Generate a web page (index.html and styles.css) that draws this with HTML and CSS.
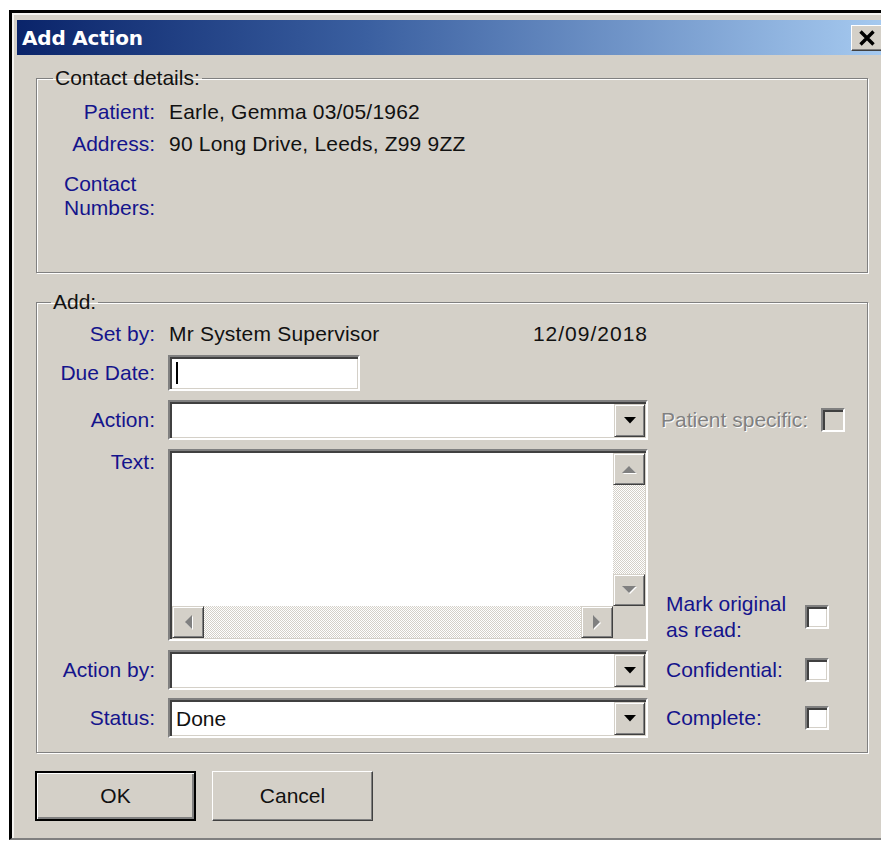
FILE: index.html
```html
<!DOCTYPE html>
<html lang="en">
<head>
<meta charset="utf-8">
<title>Add Action</title>
<link rel="stylesheet" href="styles.css">
</head>
<body>
<div class="dialog">
  <div class="titlebar">
    <span class="title">Add Action</span>
    <button class="close-btn" type="button" aria-label="Close">
      <svg width="18" height="16" viewBox="0 0 18 16"><path d="M2.5 1.5 L15.5 14.5 M15.5 1.5 L2.5 14.5" stroke="#000" stroke-width="3.4" fill="none"/></svg>
    </button>
  </div>

  <fieldset class="group group-contact">
    <legend class="legend-contact">Contact details:</legend>
    <div class="contact-grid">
      <div class="lbl">Patient:</div>
      <div class="val">Earle, Gemma 03/05/1962</div>
      <div class="lbl">Address:</div>
      <div class="val">90 Long Drive, Leeds, Z99 9ZZ</div>
      <div class="lbl lbl-multi">Contact<br>Numbers:</div>
      <div class="val"></div>
    </div>
  </fieldset>

  <fieldset class="group group-add">
    <legend class="legend-add">Add:</legend>
    <div class="add-grid">
      <!-- Set by -->
      <div class="lbl">Set by:</div>
      <div class="val setby"><span>Mr System Supervisor</span><span class="date">12/09/2018</span></div>
      <div></div>

      <!-- Due date -->
      <div class="lbl">Due Date:</div>
      <div class="field-cell"><div class="edit due"><span class="caret"></span></div></div>
      <div></div>

      <!-- Action -->
      <div class="lbl">Action:</div>
      <div class="field-cell">
        <div class="combo"><div class="combo-text"></div><span class="drop-btn"><svg width="12" height="7" viewBox="0 0 12 7"><path d="M0 0 H12 L6 6.5 Z" fill="#000"/></svg></span></div>
      </div>
      <div class="side side-specific"><span class="disabled-text">Patient specific:</span><span class="chk chk-disabled"></span></div>

      <!-- Text -->
      <div class="lbl lbl-top">Text:</div>
      <div class="field-cell">
        <div class="memo">
          <div class="memo-body"></div>
          <div class="vscroll">
            <span class="sbtn"><svg width="18" height="10" viewBox="0 0 18 10"><path d="M2 9 L9 2 L16 9 Z" fill="#fff" transform="translate(1 1)"/><path d="M2 9 L9 2 L16 9 Z" fill="#808080"/></svg></span>
            <span class="track"></span>
            <span class="sbtn"><svg width="18" height="10" viewBox="0 0 18 10"><path d="M2 1 L16 1 L9 8 Z" fill="#fff" transform="translate(1 1)"/><path d="M2 1 L16 1 L9 8 Z" fill="#808080"/></svg></span>
          </div>
          <div class="hscroll">
            <span class="sbtn"><svg width="10" height="18" viewBox="0 0 10 18"><path d="M9 2 L2 9 L9 16 Z" fill="#fff" transform="translate(1 1)"/><path d="M9 2 L2 9 L9 16 Z" fill="#808080"/></svg></span>
            <span class="track"></span>
            <span class="sbtn"><svg width="10" height="18" viewBox="0 0 10 18"><path d="M1 2 L8 9 L1 16 Z" fill="#fff" transform="translate(1 1)"/><path d="M1 2 L8 9 L1 16 Z" fill="#808080"/></svg></span>
          </div>
          <div class="corner"></div>
        </div>
      </div>
      <div class="side side-mark"><span class="side-label two-line">Mark original<br>as read:</span><span class="chk"></span></div>

      <!-- Action by -->
      <div class="lbl">Action by:</div>
      <div class="field-cell">
        <div class="combo"><div class="combo-text"></div><span class="drop-btn"><svg width="12" height="7" viewBox="0 0 12 7"><path d="M0 0 H12 L6 6.5 Z" fill="#000"/></svg></span></div>
      </div>
      <div class="side"><span class="side-label">Confidential:</span><span class="chk"></span></div>

      <!-- Status -->
      <div class="lbl">Status:</div>
      <div class="field-cell">
        <div class="combo"><div class="combo-text">Done</div><span class="drop-btn"><svg width="12" height="7" viewBox="0 0 12 7"><path d="M0 0 H12 L6 6.5 Z" fill="#000"/></svg></span></div>
      </div>
      <div class="side"><span class="side-label">Complete:</span><span class="chk"></span></div>
    </div>
  </fieldset>

  <div class="buttons">
    <button class="btn btn-default" type="button">OK</button>
    <button class="btn" type="button">Cancel</button>
  </div>
</div>
</body>
</html>
```

FILE: styles.css
```css
html, body {
  margin: 0;
  padding: 0;
  background: #fff;
  overflow: hidden;
}

body {
  font-family: "Liberation Sans", Arial, sans-serif;
  font-size: 21px;
  color: #111;
  padding: 10px 0 0 9px;
  height: 841px;
  box-sizing: border-box;
}

/* window frame */
.dialog {
  width: 868px;
  padding: 7px 0 17px 5px;
  background: #d4d0c8;
  border-left: 3px solid #000;
  border-top: 3px solid #000;
  border-bottom: 2px solid #808080;
  box-shadow: inset 2px 2px 0 #f4f3f0;
}

.titlebar {
  height: 35px;
  display: flex;
  align-items: center;
  justify-content: space-between;
  padding: 0 2px 0 5px;
  background: linear-gradient(to right, #0a246a 0%, #3a5fa0 40%, #a6caf0 100%);
}

.title {
  font-family: "DejaVu Sans", Verdana, sans-serif;
  font-weight: bold;
  font-size: 20px;
  color: #fff;
  letter-spacing: -0.2px;
}

.close-btn {
  width: 32px;
  height: 26px;
  padding: 0;
  margin: 0;
  display: flex;
  align-items: center;
  justify-content: center;
  background: #d4d0c8;
  border: 1px solid;
  border-color: #fff #404040 #404040 #fff;
  box-shadow: inset -1px -1px 0 #808080;
}

/* etched group boxes */
.group {
  margin: 11px 0 0 19px;
  padding: 0;
  width: 832px;
  min-inline-size: 0;
  box-sizing: border-box;
  border: 1px solid #808080;
  box-shadow: inset 1px 1px 0 #fff, 1px 1px 0 #fff;
}

.group legend {
  padding: 0 2px;
  line-height: 24px;
}

.legend-contact { margin-left: 16px; }
.legend-add { margin-left: 14px; }

.group-add { margin-top: 17px; }

.lbl {
  text-align: right;
  padding-right: 13px;
  color: #14148c;
}

.val { padding-left: 1px; letter-spacing: 0.2px; }

.date { letter-spacing: 1px; }

.contact-grid {
  display: grid;
  grid-template-columns: 131px 1fr;
  grid-template-rows: 32px 32px 112px;
  align-items: center;
  padding-top: 6px;
}

.lbl-multi {
  align-self: start;
  justify-self: end;
  text-align: left;
  line-height: 24px;
  margin-top: 12px;
}

.add-grid {
  display: grid;
  grid-template-columns: 131px 480px 1fr;
  grid-template-rows: 32px 46px 48px 202px 48px 48px;
  align-items: center;
  padding: 4px 0 10px 0;
}

.setby {
  display: flex;
  justify-content: space-between;
}

.lbl-top {
  align-self: start;
  line-height: 24px;
  margin-top: 6px;
}

/* sunken 3D edges */
.edit,
.combo,
.memo,
.chk {
  box-sizing: border-box;
  border: 2px solid;
  border-color: #808080 #fff #fff #808080;
  box-shadow: inset 2px 2px 0 #404040, inset -1px -1px 0 #d4d0c8;
  background: #fff;
}

.edit.due {
  width: 192px;
  height: 36px;
  display: flex;
  align-items: center;
  padding-left: 6px;
}

.caret {
  width: 2px;
  height: 22px;
  background: #000;
}

.combo {
  width: 480px;
  height: 40px;
  padding: 2px 1px 1px 2px;
  display: flex;
}

.combo-text {
  flex: 1;
  display: flex;
  align-items: center;
  padding-left: 4px;
}

/* raised 3D edges */
.drop-btn,
.sbtn {
  box-sizing: border-box;
  display: flex;
  align-items: center;
  justify-content: center;
  background: #d4d0c8;
  border: 1px solid;
  border-color: #d4d0c8 #404040 #404040 #d4d0c8;
  box-shadow: inset 1px 1px 0 #fff, inset -1px -1px 0 #808080;
}

.drop-btn {
  width: 31px;
  height: 100%;
}

.memo {
  width: 480px;
  height: 192px;
  padding: 2px 1px 1px 2px;
  display: grid;
  grid-template-columns: 1fr 32px;
  grid-template-rows: 1fr 32px;
}

.memo-body { background: #fff; }

.vscroll {
  display: flex;
  flex-direction: column;
}

.hscroll {
  display: flex;
}

.sbtn {
  width: 32px;
  height: 32px;
  flex: none;
}

.track {
  flex: 1;
  background: repeating-conic-gradient(#fff 0 25%, #d4d0c8 0 50%) 0 0 / 2px 2px;
}

.corner { background: #d4d0c8; }

.side {
  display: flex;
  align-items: center;
  justify-content: space-between;
  padding: 0 38px 0 18px;
  color: #14148c;
}

.side-specific {
  padding: 0 22px 0 13px;
}

.side-mark {
  align-self: end;
  padding-bottom: 3px;
}

.two-line { line-height: 26px; }

.disabled-text {
  color: #808080;
  text-shadow: 1px 1px 0 #fff;
}

.chk {
  width: 24px;
  height: 24px;
  flex: none;
}

.chk-disabled { background: #d4d0c8; }

/* dialog buttons */
.buttons {
  display: flex;
  gap: 16px;
  margin: 18px 0 0 18px;
}

.btn {
  width: 161px;
  height: 50px;
  margin: 0;
  padding: 0;
  box-sizing: border-box;
  font: inherit;
  color: #111;
  background: #d4d0c8;
  border: 1px solid;
  border-color: #fff #404040 #404040 #fff;
  box-shadow: inset -1px -1px 0 #808080;
}

.btn-default {
  border: 2px solid #000;
  box-shadow: inset 1px 1px 0 #fff, inset -2px -2px 0 #808080;
}
```
